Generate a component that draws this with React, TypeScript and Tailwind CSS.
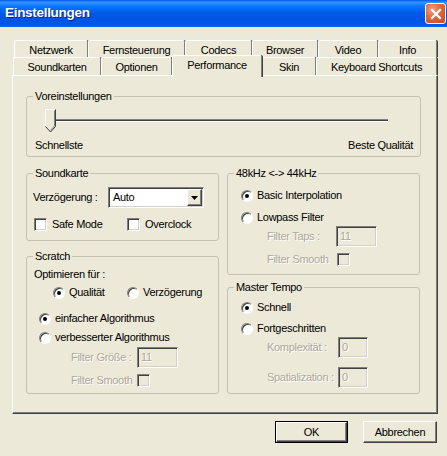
import React from 'react'

// classic 3D edges
const sunken =
  'border border-t-[#808080] border-l-[#808080] border-r-white border-b-white shadow-[inset_1px_1px_#404040,inset_-1px_-1px_#d4d0c8]'
const raised =
  'border border-t-white border-l-white border-r-[#404040] border-b-[#404040] shadow-[inset_-1px_-1px_#808080]'
const disabledText = 'whitespace-nowrap text-[#aca899] [text-shadow:1px_1px_0_#ffffff]'

const TitleBar = () => (
  <div className="h-[27px] shrink-0 flex items-center justify-between pl-[5px] pr-[1px] bg-[linear-gradient(to_bottom,#0058ee_0%,#3593ff_8%,#288eff_12%,#127dff_20%,#036ffc_30%,#0262ee_40%,#0057e5_55%,#0054e3_75%,#0055eb_90%,#005bf5_95%,#026afe_100%)]">
    <span className="text-white font-bold text-[13.5px] tracking-[-0.3px] [text-shadow:1px_1px_0_#0a1f86]">
      Einstellungen
    </span>
    <button className="w-[21px] h-[21px] rounded-[3px] border border-white bg-[radial-gradient(circle_at_35%_30%,#f2a07e_0%,#e2683f_45%,#c8451c_100%)] flex items-center justify-center">
      <svg width="12" height="12" viewBox="0 0 12 12">
        <path d="M2 2 L10 10 M10 2 L2 10" stroke="#fff" strokeWidth="2.2" strokeLinecap="square" />
      </svg>
    </button>
  </div>
)

const Tab = ({ label, width, active }: { label: string; width: number; active?: boolean }) => (
  <div
    style={{ width }}
    className={
      active
        ? 'relative z-10 -mt-[2px] h-[22px] pt-[3px] bg-[#ece9d8] border-l border-t border-l-white border-t-white border-r border-r-[#808080] shadow-[1px_0_#404040] rounded-t-[2px] text-center leading-[13px] whitespace-nowrap'
        : 'h-full pt-[3px] bg-[#ece9d8] border-l border-t border-l-white border-t-white border-r border-r-[#808080] shadow-[1px_0_#404040] rounded-t-[2px] text-center leading-[13px] whitespace-nowrap'
    }
  >
    {label}
  </div>
)

const Tabs = () => (
  <div className="flex flex-col">
    <div className="ml-[14px] flex h-[17px]">
      <Tab label="Netzwerk" width={74} />
      <Tab label="Fernsteuerung" width={97} />
      <Tab label="Codecs" width={67} />
      <Tab label="Browser" width={66} />
      <Tab label="Video" width={60} />
      <Tab label="Info" width={59} />
    </div>
    <div className="ml-[13px] flex h-[18px]">
      <Tab label="Soundkarten" width={88} />
      <Tab label="Optionen" width={71} />
      <Tab label="Performance" width={90} active />
      <Tab label="Skin" width={54} />
      <Tab label="Keyboard Shortcuts" width={121} />
    </div>
  </div>
)

const Group = ({ title, className, children }: { title: string; className: string; children: React.ReactNode }) => (
  <fieldset className={`p-0 border border-[#c3c1b1] rounded-[3px] ${className}`}>
    <legend className="ml-[6px] px-[2px] leading-[13px]">{title}</legend>
    {children}
  </fieldset>
)

const Radio = ({ label, checked }: { label: string; checked?: boolean }) => (
  <div className="flex items-center gap-[4px] h-[13px] leading-[13px] whitespace-nowrap">
    <span className="w-[12px] h-[12px] shrink-0 rounded-full bg-white border border-t-[#808080] border-l-[#808080] border-r-white border-b-white shadow-[inset_1px_1px_#404040] flex items-center justify-center">
      {checked && <span className="w-[4px] h-[4px] rounded-full bg-black" />}
    </span>
    <span>{label}</span>
  </div>
)

const Checkbox = ({ label, disabled }: { label?: string; disabled?: boolean }) => (
  <div className="flex items-center gap-[5px] h-[13px] leading-[13px] whitespace-nowrap">
    <span className={`w-[13px] h-[13px] shrink-0 ${disabled ? 'bg-[#ece9d8]' : 'bg-white'} ${sunken}`} />
    {label && <span>{label}</span>}
  </div>
)

const Field = ({ value, width }: { value: string; width: number }) => (
  <div style={{ width }} className={`h-[21px] shrink-0 pl-[3px] flex items-center bg-[#ece9d8] ${sunken} ${disabledText}`}>
    {value}
  </div>
)

const Slider = () => (
  <div className="relative h-[24px] ml-[18px] mr-[32px]">
    <div className="absolute left-[3px] right-0 top-[10px] h-[3px] border-t border-t-[#808080] border-b border-b-white bg-[#404040]" />
    <svg className="absolute left-0 top-0" width="11" height="24" viewBox="0 0 11 24">
      <polygon points="0.5,0.5 10.5,0.5 10.5,17.5 5.5,23 0.5,17.5" fill="#ece9d8" />
      <path d="M0.5 18 V0.5 H10" stroke="#ffffff" fill="none" />
      <path d="M10.5 0.5 V17.5 L5.5 23 L0.5 17.5" stroke="#404040" fill="none" />
      <path d="M9.5 1.5 V17 L5.5 21.5" stroke="#808080" fill="none" />
    </svg>
  </div>
)

const Panel = () => (
  <div className="ml-[12px] w-[426px] h-[339px] border border-t-white border-l-white border-r-[#404040] border-b-[#404040] shadow-[inset_-1px_-1px_#808080] pt-[14px] pl-[13px] pr-[16px]">
    <Group title="Voreinstellungen" className="h-[67px]">
      <div className="mt-[6px]">
        <Slider />
      </div>
      <div className="mt-[6px] flex justify-between pl-[8px] pr-[7px] leading-[13px]">
        <span>Schnellste</span>
        <span>Beste Qualität</span>
      </div>
    </Group>

    <div className="mt-[10px] flex gap-[8px]">
      <div className="w-[193px] flex flex-col">
        <Group title="Soundkarte" className="h-[74px]">
          <div className="mt-[7px] pl-[6px] flex items-center h-[21px]">
            <span className="w-[75px] whitespace-nowrap">Verzögerung :</span>
            <div className={`w-[96px] h-[21px] bg-white flex items-center justify-between pl-[4px] pr-[1px] ${sunken}`}>
              <span>Auto</span>
              <span className={`w-[15px] h-[17px] bg-[#ece9d8] flex items-center justify-center ${raised}`}>
                <svg width="7" height="4" viewBox="0 0 7 4">
                  <polygon points="0,0 7,0 3.5,4" fill="#000" />
                </svg>
              </span>
            </div>
          </div>
          <div className="mt-[10px] pl-[7px] flex">
            <div className="w-[93px]">
              <Checkbox label="Safe Mode" />
            </div>
            <Checkbox label="Overclock" />
          </div>
        </Group>

        <Group title="Scratch" className="mt-[9px] h-[144px]">
          <div className="mt-[5px] pl-[7px] leading-[13px]">Optimieren für :</div>
          <div className="mt-[5px] pl-[26px] flex">
            <div className="w-[74px]">
              <Radio label="Qualität" checked />
            </div>
            <Radio label="Verzögerung" />
          </div>
          <div className="mt-[13px] pl-[12px]">
            <Radio label="einfacher Algorithmus" checked />
          </div>
          <div className="mt-[6px] pl-[12px]">
            <Radio label="verbesserter Algorithmus" />
          </div>
          <div className="mt-[3px] pl-[44px] flex items-center">
            <span className={`w-[66px] ${disabledText}`}>Filter Größe :</span>
            <Field value="11" width={41} />
          </div>
          <div className="mt-[6px] pl-[44px] flex items-center">
            <span className={`w-[66px] leading-[13px] ${disabledText}`}>Filter Smooth</span>
            <Checkbox disabled />
          </div>
        </Group>
      </div>

      <div className="w-[193px] flex flex-col">
        <Group title="48kHz <-> 44kHz" className="h-[108px]">
          <div className="mt-[9px] pl-[13px]">
            <Radio label="Basic Interpolation" checked />
          </div>
          <div className="mt-[9px] pl-[13px]">
            <Radio label="Lowpass Filter" />
          </div>
          <div className="mt-[2px] pl-[39px] flex items-center">
            <span className={`w-[69px] ${disabledText}`}>Filter Taps :</span>
            <Field value="11" width={41} />
          </div>
          <div className="mt-[6px] pl-[39px] flex items-center">
            <span className={`w-[70px] leading-[13px] ${disabledText}`}>Filter Smooth</span>
            <Checkbox disabled />
          </div>
        </Group>

        <Group title="Master Tempo" className="mt-[6px] h-[113px]">
          <div className="mt-[7px] pl-[13px]">
            <Radio label="Schnell" checked />
          </div>
          <div className="mt-[8px] pl-[13px]">
            <Radio label="Fortgeschritten" />
          </div>
          <div className="mt-[2px] pl-[39px] flex items-center">
            <span className={`w-[71px] ${disabledText}`}>Komplexität :</span>
            <Field value="0" width={30} />
          </div>
          <div className="mt-[9px] pl-[39px] flex items-center">
            <span className={`w-[71px] ${disabledText}`}>Spatialization :</span>
            <Field value="0" width={30} />
          </div>
        </Group>
      </div>
    </div>
  </div>
)

const Buttons = () => (
  <div className="mt-[7px] flex justify-end gap-[15px] pr-[10px]">
    <button className="w-[73px] h-[22px] border border-black bg-[#ece9d8] p-0">
      <span className={`block w-full h-full leading-[18px] ${raised}`}>OK</span>
    </button>
    <button className={`w-[74px] h-[22px] bg-[#ece9d8] leading-[18px] ${raised}`}>Abbrechen</button>
  </div>
)

export default function App() {
  return (
    <div className="w-[447px] h-[456px] bg-[#ece9d8] flex flex-col overflow-hidden text-[11px] tracking-[-0.3px] text-black font-['Liberation_Sans',Arial,sans-serif]">
      <TitleBar />
      <div className="pt-[13px] flex flex-col">
        <Tabs />
        <Panel />
      </div>
      <Buttons />
    </div>
  )
}
